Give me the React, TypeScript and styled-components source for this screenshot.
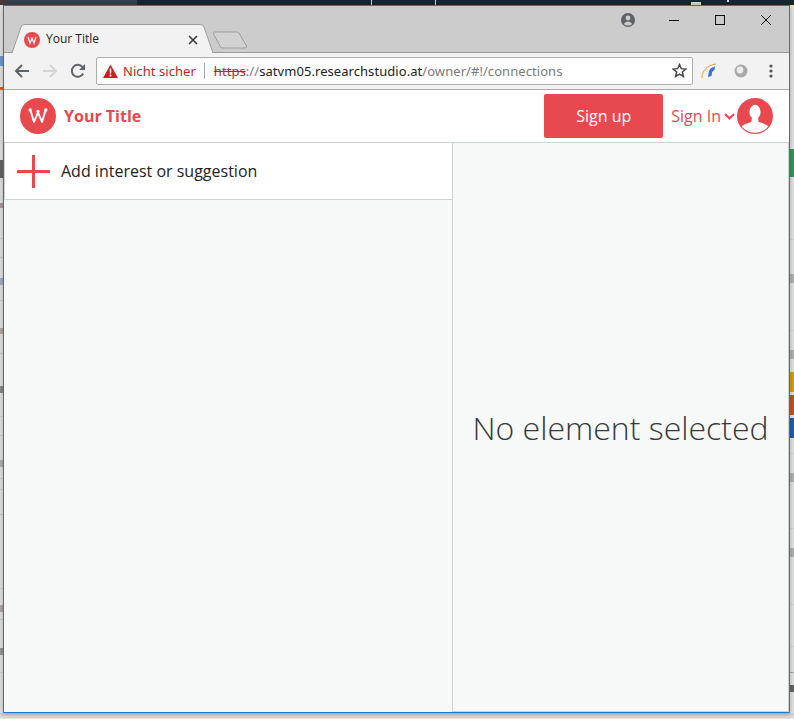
import styled, { createGlobalStyle } from 'styled-components';

const GlobalStyle = createGlobalStyle`
  html, body {
    margin: 0;
    padding: 0;
    background: #e6e6e6;
    overflow: hidden;
  }
  * {
    box-sizing: border-box;
  }
`;

const RED = '#e8494f';
const LINE = '#cdd3d3';

const Desktop = styled.div`
  display: grid;
  grid-template-columns: 3px 787px 4px;
  grid-template-rows: 5px 708px 6px;
  width: 794px;
  height: 719px;
  overflow: hidden;
  background: #e4e4e4;
`;

const TopStrip = styled.div`
  grid-column: 1 / -1;
  position: relative;
  background: #1f232a;
`;

const TopLeftPart = styled.div`
  width: 137px;
  height: 100%;
  background: #3b3e43;
`;

const Edge = styled.div`
  position: relative;
  background: #e6e6e6;
`;

const BottomStrip = styled.div`
  grid-column: 1 / -1;
  background: linear-gradient(#cfcfcf, #e6e6e6);
`;

// bits of the window lying behind this one
const Mark = styled.span<{ $top: number; $h: number; $color: string; $left?: number; $w?: number }>`
  position: absolute;
  top: ${(p) => p.$top}px;
  left: ${(p) => p.$left ?? 0}px;
  width: ${(p) => (p.$w ? `${p.$w}px` : '100%')};
  height: ${(p) => p.$h}px;
  background: ${(p) => p.$color};
`;

const Window = styled.div`
  display: flex;
  flex-direction: column;
  border: 1px solid #1b7bd3;
  box-shadow: 0 1px 6px rgba(0, 0, 0, 0.3);
  background: #fff;
  z-index: 1;
  font-family: 'Open Sans', 'Noto Sans', sans-serif;
`;

const TitleBar = styled.div`
  display: flex;
  align-items: flex-end;
  height: 47px;
  padding-left: 8px;
  background: #cccccc;
  border-bottom: 1px solid #9c9c9c;
`;

const Tab = styled.div`
  position: relative;
  display: flex;
  align-items: center;
  width: 201px;
  height: 29px;
  margin-bottom: -1px;
  padding: 2px 12px 0 12px;
`;

const TabShape = styled.svg`
  position: absolute;
  inset: 0;
`;

const TabFavicon = styled.svg`
  position: relative;
  flex: none;
`;

const TabTitle = styled.span`
  position: relative;
  flex: 1;
  margin: -2px 0 0 6px;
  font-size: 12px;
  color: #222;
`;

const TabClose = styled.svg`
  position: relative;
  flex: none;
  margin-right: 3px;
`;

const NewTab = styled.svg`
  flex: none;
  margin: 0 0 3px -1px;
`;

const WindowControls = styled.div`
  display: flex;
  align-items: center;
  align-self: flex-start;
  margin-left: auto;
  height: 28px;
`;

const ProfileDot = styled.svg`
  margin-right: 16px;
`;

const ControlButton = styled.div`
  display: flex;
  align-items: center;
  justify-content: center;
  width: 46px;
  height: 28px;
`;

const Toolbar = styled.div`
  display: flex;
  align-items: center;
  height: 37px;
  padding: 0 0 1px 4px;
  background: #f2f2f2;
  border-bottom: 1px solid #ababab;
`;

const ToolButton = styled.div<{ $w?: number }>`
  display: flex;
  flex: none;
  align-items: center;
  justify-content: center;
  width: ${(p) => p.$w ?? 28}px;
  height: 28px;
`;

const Omnibox = styled.div`
  display: flex;
  flex: none;
  align-items: center;
  width: 597px;
  height: 28px;
  margin-left: 4px;
  padding: 0 5px 0 6px;
  background: #fff;
  border: 1px solid #adadad;
  border-radius: 2px;
  font-family: 'Noto Sans', 'Open Sans', sans-serif;
  font-size: 13px;
  letter-spacing: 0.06px;
  white-space: nowrap;
`;

const NotSecure = styled.span`
  margin-left: 5px;
  color: #c5221f;
`;

const UrlDivider = styled.span`
  width: 1px;
  height: 16px;
  margin: 0 9px 0 8px;
  background: #a6a6a6;
`;

const UrlPart = styled.span<{ $tone: 'scheme' | 'host' | 'path' }>`
  color: ${(p) => (p.$tone === 'scheme' ? '#c5221f' : p.$tone === 'host' ? '#222' : '#7a7a7a')};
  text-decoration: ${(p) => (p.$tone === 'scheme' ? 'line-through' : 'none')};
`;

const StarIcon = styled.svg`
  margin-left: auto;
`;

const Header = styled.header`
  display: flex;
  align-items: center;
  height: 53px;
  padding: 0 16px;
  background: #fff;
  border-bottom: 1px solid ${LINE};
`;

const Brand = styled.div`
  display: flex;
  align-items: center;
  gap: 8px;
  font-size: 16px;
  font-weight: 700;
  color: ${RED};
`;

const HeaderRight = styled.div`
  display: flex;
  align-items: center;
  margin-left: auto;
`;

const SignUp = styled.button`
  width: 119px;
  height: 44px;
  margin-right: 8px;
  padding: 0;
  border: none;
  border-radius: 2px;
  background: ${RED};
  color: #fff;
  font-family: inherit;
  font-size: 16px;
`;

const SignIn = styled.div`
  display: flex;
  align-items: center;
  color: ${RED};
  font-size: 16px;
`;

const Chevron = styled.svg`
  margin: 1px 2px 0 3px;
`;

const Body = styled.main`
  display: flex;
  flex: 1;
  min-height: 0;
  background: #f7f9f8;
`;

const LeftPanel = styled.section`
  flex: none;
  width: 448px;
`;

const AddCard = styled.div`
  display: flex;
  align-items: center;
  gap: 11px;
  height: 57px;
  padding-left: 12px;
  background: #fff;
  border-left: 1px solid ${LINE};
  border-bottom: 1px solid ${LINE};
  font-size: 16px;
  color: #222;
`;

const RightPanel = styled.section`
  display: flex;
  flex: 1;
  align-items: center;
  justify-content: center;
  border-left: 1px solid ${LINE};
  border-right: 1px solid ${LINE};
  border-bottom: 1px solid ${LINE};
`;

const EmptyText = styled.div`
  margin-top: 1px;
  font-size: 32px;
  font-weight: 300;
  color: #36393d;
  white-space: nowrap;
`;

function LogoMark({ size }: { size: number }) {
  return (
    <svg width={size} height={size} viewBox="0 0 36 36">
      <circle cx="18" cy="18" r="18" fill={RED} />
      <path
        d="M10.5 12.5 L14 24 L18 14.5 L22 24 L25.5 12.5"
        fill="none"
        stroke="#fff"
        strokeWidth="1.9"
        strokeLinejoin="round"
      />
      <circle cx="10.2" cy="12" r="1.7" fill="#fff" />
      <circle cx="25.8" cy="12" r="1.7" fill="#fff" />
      <circle cx="18" cy="13.4" r="1.6" fill="#fff" />
    </svg>
  );
}

const leftMarks = [
  { top: 56, h: 10, color: '#6f9ad0' },
  { top: 87, h: 3, color: '#d2691e' },
  { top: 160, h: 18, color: '#666' },
  { top: 203, h: 5, color: '#a89ca0' },
  { top: 238, h: 1, color: '#d6d6d6' },
  { top: 257, h: 1, color: '#c0cfe2' },
  { top: 278, h: 7, color: '#a9b1c0' },
  { top: 300, h: 1, color: '#c0cfe2' },
  { top: 328, h: 6, color: '#b5aca8' },
  { top: 353, h: 1, color: '#c0cfe2' },
  { top: 386, h: 7, color: '#8c8c8c' },
  { top: 416, h: 1, color: '#d6d6d6' },
  { top: 435, h: 1, color: '#c0cfe2' },
  { top: 460, h: 7, color: '#b0b0b0' },
  { top: 478, h: 1, color: '#d6d6d6' },
  { top: 489, h: 1, color: '#d6d6d6' },
  { top: 514, h: 1, color: '#cccccc' },
  { top: 588, h: 1, color: '#d6d6d6' },
  { top: 605, h: 7, color: '#b0a8b0' },
  { top: 619, h: 1, color: '#cccccc' },
  { top: 648, h: 7, color: '#999' },
  { top: 672, h: 1, color: '#d6d6d6' },
];

const rightMarks = [
  { top: 149, h: 28, color: '#2f9e57' },
  { top: 239, h: 1, color: '#d6d6d6' },
  { top: 274, h: 9, color: '#b4b4b4' },
  { top: 330, h: 1, color: '#d6d6d6' },
  { top: 350, h: 9, color: '#b4b4b4' },
  { top: 372, h: 20, color: '#d9a400' },
  { top: 395, h: 20, color: '#c9541f' },
  { top: 418, h: 20, color: '#1c64b8' },
  { top: 453, h: 1, color: '#d6d6d6' },
  { top: 473, h: 9, color: '#b4b4b4' },
  { top: 528, h: 1, color: '#d6d6d6' },
  { top: 548, h: 9, color: '#b4b4b4' },
  { top: 604, h: 1, color: '#d6d6d6' },
  { top: 646, h: 1, color: '#d6d6d6' },
  { top: 672, h: 1, color: '#aaa' },
  { top: 685, h: 7, color: '#666' },
];

export default function App() {
  return (
    <>
      <GlobalStyle />
      <Desktop>
        <TopStrip>
          <TopLeftPart />
          <Mark $top={0} $h={5} $color="#d8d8d8" $left={371} $w={1} />
          <Mark $top={0} $h={5} $color="#d8d8d8" $left={435} $w={1} />
          <Mark $top={2} $h={3} $color="#d8d8d8" $left={691} $w={10} />
          <Mark $top={0} $h={2} $color="#d8d8d8" $left={727} $w={2} />
        </TopStrip>
        <Edge>
          {leftMarks.map((m) => (
            <Mark key={m.top} $top={m.top - 5} $h={m.h} $color={m.color} />
          ))}
        </Edge>
        <Window>
          <TitleBar>
            <Tab>
              <TabShape width="201" height="29" viewBox="0 0 201 29">
                <path
                  d="M0 29 L9 3 Q10 0.5 13 0.5 L188 0.5 Q191 0.5 192 3 L201 29 Z"
                  fill="#f2f2f2"
                  stroke="#9c9c9c"
                />
                <path d="M1 28.5 L200 28.5" stroke="#f2f2f2" strokeWidth="1.5" />
              </TabShape>
              <TabFavicon width="16" height="16" viewBox="0 0 36 36">
                <circle cx="18" cy="18" r="18" fill={RED} />
                <path
                  d="M9 11 L13.5 25 L18 14 L22.5 25 L27 11"
                  fill="none"
                  stroke="#fff"
                  strokeWidth="2.8"
                />
              </TabFavicon>
              <TabTitle>Your Title</TabTitle>
              <TabClose width="10" height="10" viewBox="0 0 10 10">
                <path d="M1 1 L9 9 M9 1 L1 9" stroke="#333" strokeWidth="1.5" />
              </TabClose>
            </Tab>
            <NewTab width="36" height="18" viewBox="0 0 36 18">
              <path
                d="M2.5 1 L25 1 Q26.5 1 27 2 L34.5 15 Q35 17 33 17 L10 17 Q9 17 8.5 16 L1.5 3 Q1 1 2.5 1 Z"
                fill="#d2d2d2"
                stroke="#9c9c9c"
              />
            </NewTab>
            <WindowControls>
              <ProfileDot width="14" height="14" viewBox="0 0 14 14">
                <circle cx="7" cy="7" r="7" fill="#5f6368" />
                <circle cx="7" cy="5" r="2.4" fill="#ccc" />
                <path d="M2.8 11 Q4 8.4 7 8.4 Q10 8.4 11.2 11 Q9.5 12.5 7 12.5 Q4.5 12.5 2.8 11 Z" fill="#ccc" />
              </ProfileDot>
              <ControlButton>
                <svg width="10" height="10" viewBox="0 0 10 10">
                  <path d="M0 5.5 H10" stroke="#111" strokeWidth="1" />
                </svg>
              </ControlButton>
              <ControlButton>
                <svg width="10" height="10" viewBox="0 0 10 10">
                  <rect x="0.5" y="0.5" width="9" height="9" fill="none" stroke="#111" />
                </svg>
              </ControlButton>
              <ControlButton>
                <svg width="10" height="10" viewBox="0 0 10 10">
                  <path d="M0 0 L10 10 M10 0 L0 10" stroke="#111" strokeWidth="1" />
                </svg>
              </ControlButton>
            </WindowControls>
          </TitleBar>
          <Toolbar>
            <ToolButton>
              <svg width="16" height="16" viewBox="0 0 16 16">
                <path d="M15 8 H2 M8 2 L2 8 L8 14" fill="none" stroke="#5f6368" strokeWidth="2" />
              </svg>
            </ToolButton>
            <ToolButton>
              <svg width="16" height="16" viewBox="0 0 16 16">
                <path d="M1 8 H14 M8 2 L14 8 L8 14" fill="none" stroke="#d4d4d4" strokeWidth="2" />
              </svg>
            </ToolButton>
            <ToolButton>
              <svg width="16" height="16" viewBox="0 0 16 16">
                <path d="M13.2 10.5 A6 6 0 1 1 12.4 3.9" fill="none" stroke="#5f6368" strokeWidth="2" />
                <path d="M15 1 V7 H9 Z" fill="#5f6368" />
              </svg>
            </ToolButton>
            <Omnibox>
              <svg width="15" height="14" viewBox="0 0 15 14">
                <path d="M7.5 0.5 L15 14 H0 Z" fill="#c5221f" />
                <path d="M7.5 4.5 V9.5 M7.5 10.6 V12.4" stroke="#fff" strokeWidth="1.5" />
              </svg>
              <NotSecure>Nicht sicher</NotSecure>
              <UrlDivider />
              <UrlPart $tone="scheme">https</UrlPart>
              <UrlPart $tone="path">://</UrlPart>
              <UrlPart $tone="host">satvm05.researchstudio.at</UrlPart>
              <UrlPart $tone="path">/owner/#!/connections</UrlPart>
              <StarIcon width="15" height="15" viewBox="0 0 24 24">
                <path
                  d="M12 2.5 L14.9 9 L22 9.7 L16.6 14.4 L18.2 21.5 L12 17.8 L5.8 21.5 L7.4 14.4 L2 9.7 L9.1 9 Z"
                  fill="none"
                  stroke="#444"
                  strokeWidth="2.4"
                />
              </StarIcon>
            </Omnibox>
            <ToolButton $w={32}>
              <svg width="16" height="16" viewBox="0 0 16 16">
                <path d="M1 15 C1 8 6 2 15 1" fill="none" stroke="#e0a030" strokeWidth="1" />
                <path d="M7 14 L8 8 Q9 4.5 14 3.5 L13.5 7 Q11.5 7.5 11 9.5 L10.5 13 Z" fill="#3f6fd8" />
              </svg>
            </ToolButton>
            <ToolButton $w={32}>
              <svg width="14" height="14" viewBox="0 0 14 14">
                <circle cx="7" cy="7" r="6.5" fill="#a9a9a9" />
                <circle cx="6" cy="6" r="3.4" fill="#ececec" />
              </svg>
            </ToolButton>
            <ToolButton>
              <svg width="4" height="14" viewBox="0 0 4 14">
                <circle cx="2" cy="2" r="1.6" fill="#555" />
                <circle cx="2" cy="7" r="1.6" fill="#555" />
                <circle cx="2" cy="12" r="1.6" fill="#555" />
              </svg>
            </ToolButton>
          </Toolbar>
          <Header>
            <Brand>
              <LogoMark size={36} />
              Your Title
            </Brand>
            <HeaderRight>
              <SignUp>Sign up</SignUp>
              <SignIn>
                Sign In
                <Chevron width="11" height="7" viewBox="0 0 11 7">
                  <path d="M1 1 L5.5 5.5 L10 1" fill="none" stroke={RED} strokeWidth="2" />
                </Chevron>
                <svg width="36" height="36" viewBox="0 0 36 36">
                  <defs>
                    <clipPath id="avatar-clip">
                      <circle cx="18" cy="18" r="16.8" />
                    </clipPath>
                  </defs>
                  <circle cx="18" cy="18" r="18" fill={RED} />
                  <g clipPath="url(#avatar-clip)" fill="#fff">
                    <ellipse cx="18" cy="14" rx="5.6" ry="7.2" />
                    <path d="M15 19 L21 19 L21.6 24 Q30 26 33 30 L33 38 L3 38 L3 30 Q6 26 14.4 24 Z" />
                  </g>
                </svg>
              </SignIn>
            </HeaderRight>
          </Header>
          <Body>
            <LeftPanel>
              <AddCard>
                <svg width="33" height="33" viewBox="0 0 33 33">
                  <path d="M16.5 0 V33 M0 16.5 H33" stroke={RED} strokeWidth="3" />
                </svg>
                Add interest or suggestion
              </AddCard>
            </LeftPanel>
            <RightPanel>
              <EmptyText>No element selected</EmptyText>
            </RightPanel>
          </Body>
        </Window>
        <Edge>
          {rightMarks.map((m) => (
            <Mark key={m.top} $top={m.top - 5} $h={m.h} $color={m.color} />
          ))}
        </Edge>
        <BottomStrip />
      </Desktop>
    </>
  );
}
